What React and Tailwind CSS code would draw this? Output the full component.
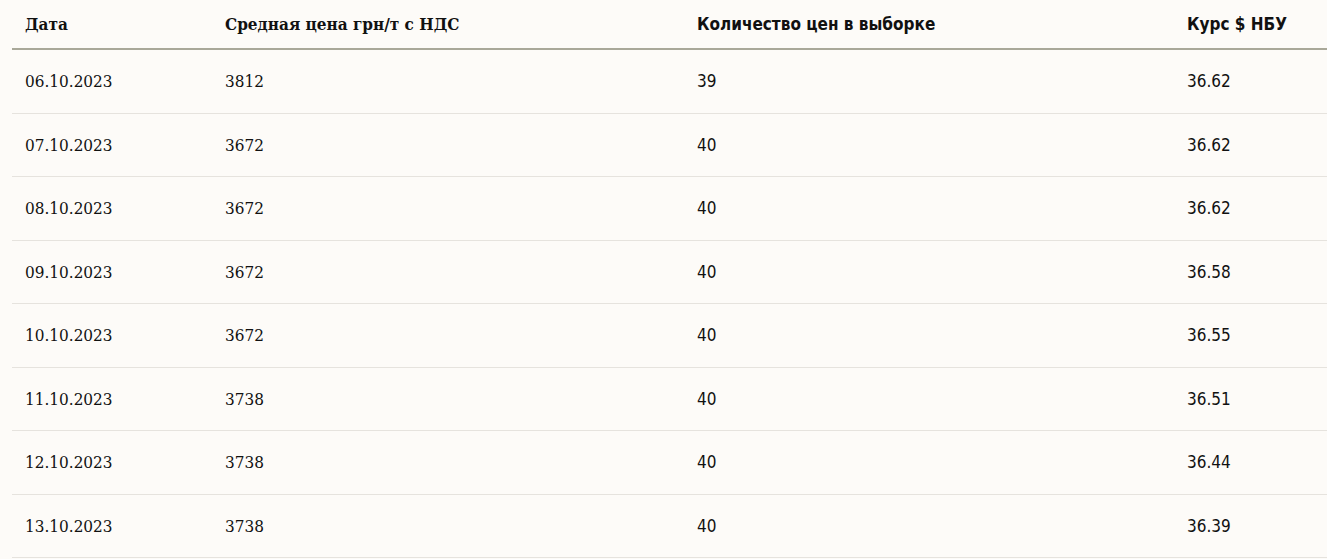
import React from "react";

const rows = [
  ["06.10.2023", "3812", "39", "36.62"],
  ["07.10.2023", "3672", "40", "36.62"],
  ["08.10.2023", "3672", "40", "36.62"],
  ["09.10.2023", "3672", "40", "36.58"],
  ["10.10.2023", "3672", "40", "36.55"],
  ["11.10.2023", "3738", "40", "36.51"],
  ["12.10.2023", "3738", "40", "36.44"],
  ["13.10.2023", "3738", "40", "36.39"],
];

const serif = "[font-family:'DejaVu_Serif_Condensed','DejaVu_Serif',serif]";
const cond = "[font-family:'DejaVu_Sans_Condensed','Roboto',sans-serif]";

export default function App() {
  return (
    <div className="min-h-[559px] w-[1327px] bg-[#fdfbf8] pl-[12px] overflow-hidden text-[#111111]">
      <div className="w-[1315px]">
        <div className="flex h-[50px] border-b-2 border-[#a9a899] text-[17px] font-bold">
          <div className={`w-[200px] pl-[13px] pt-[12px] ${serif}`}>Дата</div>
          <div className={`w-[472px] pl-[13px] pt-[12px] ${serif}`}>Средная цена грн/т с НДС</div>
          <div className={`w-[490px] pl-[13px] pt-[12px] ${cond}`}>Количество цен в выборке</div>
          <div className={`flex-1 pl-[13px] pt-[12px] ${cond}`}>Курс $ НБУ</div>
        </div>
        {rows.map((r, i) => (
          <div key={i} className="flex h-[63.56px] items-center border-b border-[#e6e3de] pt-[1px] text-[17px]">
            <div className={`w-[200px] pl-[13px] ${serif}`}>{r[0]}</div>
            <div className={`w-[472px] pl-[13px] ${serif}`}>{r[1]}</div>
            <div className={`w-[490px] pl-[13px] ${cond}`}>{r[2]}</div>
            <div className={`flex-1 pl-[13px] ${cond}`}>{r[3]}</div>
          </div>
        ))}
      </div>
    </div>
  );
}
